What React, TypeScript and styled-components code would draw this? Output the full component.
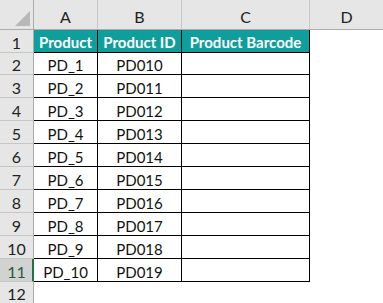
import React from "react";
import styled, { createGlobalStyle } from "styled-components";

const Global = createGlobalStyle`
  html, body { margin: 0; padding: 0; background: #ffffff; }
  body { font-family: Lato, "Open Sans", sans-serif; }
`;

const Sheet = styled.div`
  display: grid;
  grid-template-columns: 34px 64px 84px 128px 1fr;
  grid-template-rows: 30px 23px 22px repeat(9, 23px) 22px;
  width: 383px;
  height: 303px;
  overflow: hidden;
  background: #ffffff;
`;

const Corner = styled.div`
  position: relative;
  background: #e6e6e6;
  border-right: 1px solid #ababab;
  border-bottom: 1px solid #ababab;
  box-sizing: border-box;
`;

const Triangle = styled.div`
  position: absolute;
  right: 3px;
  bottom: 3px;
  width: 0;
  height: 0;
  border-left: 15px solid transparent;
  border-bottom: 15px solid #b8b8b8;
`;

const ColHead = styled.div<{ $last?: boolean }>`
  display: flex;
  align-items: center;
  justify-content: center;
  background: #e6e6e6;
  border-bottom: 1px solid #ababab;
  border-right: ${(p) => (p.$last ? "none" : "1px solid #c6c6c6")};
  box-sizing: border-box;
  font-family: Lato, sans-serif;
  font-size: 16px;
  color: #222222;
  padding-top: 4px;
`;

const RowHead = styled.div<{ $sel?: boolean }>`
  display: flex;
  align-items: center;
  justify-content: center;
  background: ${(p) => (p.$sel ? "#d2d2d2" : "#e6e6e6")};
  border-right: ${(p) => (p.$sel ? "2px solid #217346" : "1px solid #ababab")};
  border-bottom: 1px solid #c6c6c6;
  box-sizing: border-box;
  font-family: Lato, sans-serif;
  font-size: 16px;
  color: ${(p) => (p.$sel ? "#1e5e3a" : "#222222")};
  padding-left: ${(p) => (p.$sel ? "1px" : "0")};
  padding-top: 2px;
`;

const Cell = styled.div<{ $head?: boolean; $table?: boolean }>`
  display: flex;
  align-items: center;
  justify-content: center;
  box-sizing: border-box;
  background: ${(p) => (p.$head ? "#0f9e9b" : "#ffffff")};
  color: ${(p) => (p.$head ? "#ffffff" : "#111111")};
  font-weight: ${(p) => (p.$head ? 700 : 400)};
  font-family: Lato, sans-serif;
  font-size: 15px;
  white-space: nowrap;
  border-right: ${(p) => (p.$table ? "1px solid #000000" : "none")};
  border-bottom: ${(p) => (p.$table ? "1px solid #000000" : "none")};
  padding-top: ${(p) => (p.$head ? "1px" : "3px")};
`;

const cols = ["A", "B", "C", "D"];
const header = ["Product", "Product ID", "Product Barcode"];
const data = Array.from({ length: 10 }, (_, i) => [`PD_${i + 1}`, `PD0${10 + i}`, ""]);

export default function App() {
  return (
    <>
      <Global />
      <Sheet>
        <Corner>
          <Triangle />
        </Corner>
        {cols.map((c, i) => (
          <ColHead key={c} $last={i === cols.length - 1}>
            {c}
          </ColHead>
        ))}
        <RowHead>1</RowHead>
        {header.map((h) => (
          <Cell key={h} $head $table>
            {h}
          </Cell>
        ))}
        <Cell />
        {data.map((row, r) => (
          <React.Fragment key={r}>
            <RowHead $sel={r === 9}>{r + 2}</RowHead>
            {row.map((v, c) => (
              <Cell key={c} $table>
                {v}
              </Cell>
            ))}
            <Cell />
          </React.Fragment>
        ))}
        <RowHead>12</RowHead>
        <Cell />
        <Cell />
        <Cell />
        <Cell />
      </Sheet>
    </>
  );
}
